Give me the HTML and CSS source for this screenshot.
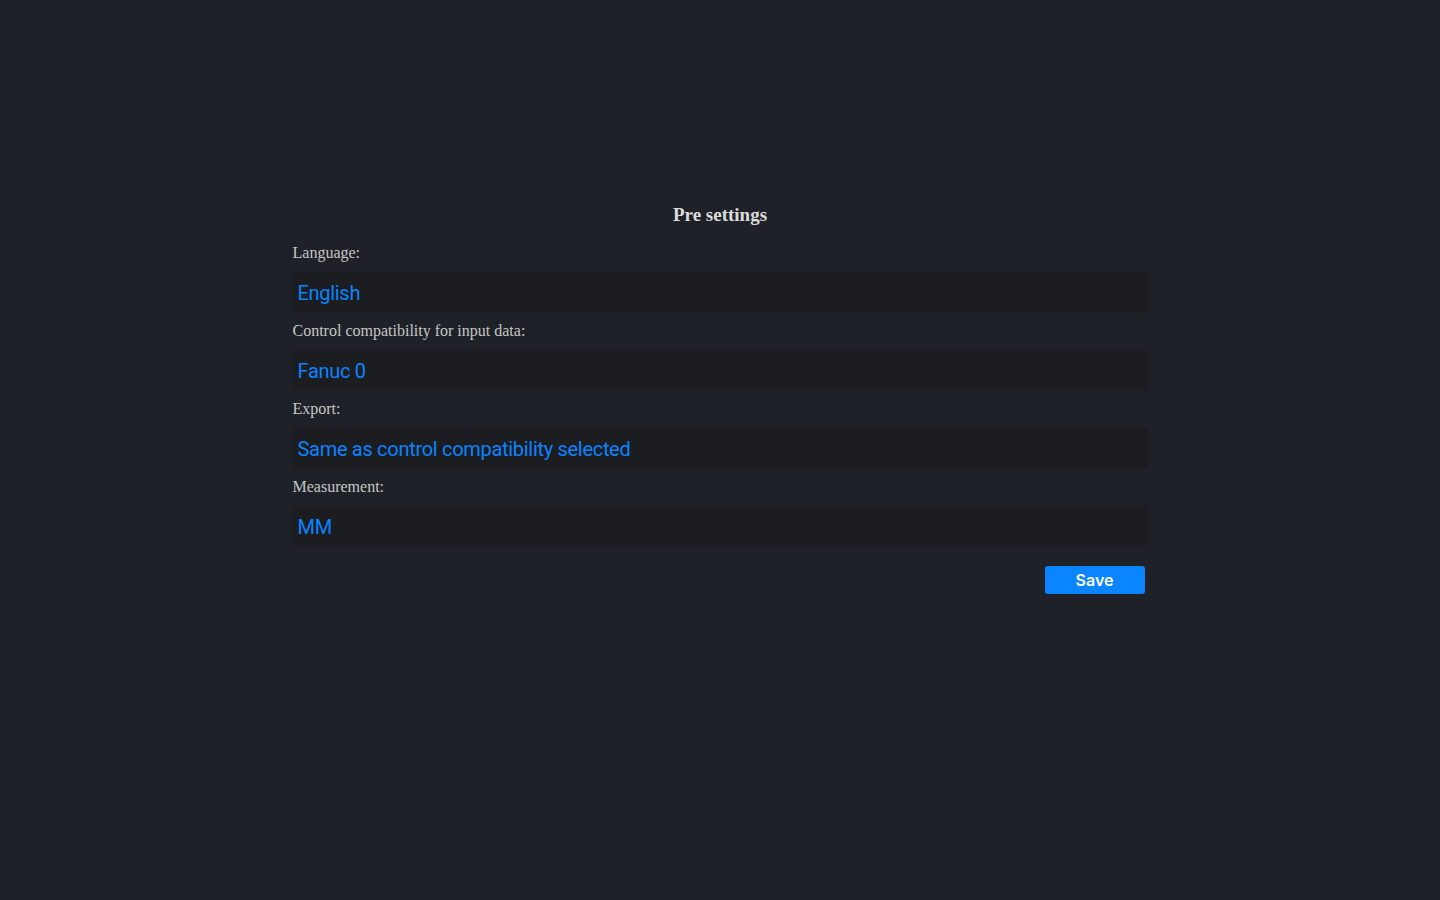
FILE: index.html
```html
<!DOCTYPE html>
<html lang="en">
<head>
<meta charset="utf-8">
<title>Pre settings</title>
<link rel="stylesheet" href="styles.css">
</head>
<body>
<main class="page">
  <form class="settings">
    <h3 class="title">Pre settings</h3>
    <div class="group">
      <label class="label">Language:</label>
      <div class="field">English</div>
    </div>
    <div class="group">
      <label class="label">Control compatibility for input data:</label>
      <div class="field">Fanuc 0</div>
    </div>
    <div class="group">
      <label class="label">Export:</label>
      <div class="field">Same as control compatibility selected</div>
    </div>
    <div class="group">
      <label class="label">Measurement:</label>
      <div class="field">MM</div>
    </div>
    <div class="actions">
      <button type="button" class="save">Save</button>
    </div>
  </form>
</main>
</body>
</html>
```

FILE: styles.css
```css
html, body {
  margin: 0;
  padding: 0;
  height: 100%;
  background: #1f2129;
}

.page {
  display: flex;
  justify-content: center;
  padding-top: 203px;
}

.settings {
  width: 855px;
  display: flex;
  flex-direction: column;
  font-family: "Liberation Serif", "Times New Roman", serif;
}

.title {
  margin: 0 0 16px;
  text-align: center;
  font-size: 19px;
  line-height: 24px;
  font-weight: bold;
  color: #dcdcdc;
}

.group {
  display: flex;
  flex-direction: column;
  margin-bottom: 9px;
}

.label {
  font-size: 16px;
  line-height: 20px;
  color: #c4c7c4;
  margin-bottom: 9px;
}

.field {
  height: 40px;
  box-sizing: border-box;
  display: flex;
  align-items: center;
  padding: 2px 5px 0;
  background: #1b1d21;
  border-radius: 3px;
  color: #0a84ff;
  font-family: Roboto, Inter, "Noto Sans", sans-serif;
  font-size: 20px;
  letter-spacing: -0.3px;
}

.actions {
  display: flex;
  justify-content: flex-end;
  padding-right: 3px;
  margin-top: 11px;
}

.save {
  width: 100px;
  height: 28px;
  border: none;
  border-radius: 3px;
  background: #0a84ff;
  color: #ffffff;
  font-family: Inter, "Noto Sans", sans-serif;
  font-size: 16px;
  font-weight: 600;
  padding: 0;
}
```
